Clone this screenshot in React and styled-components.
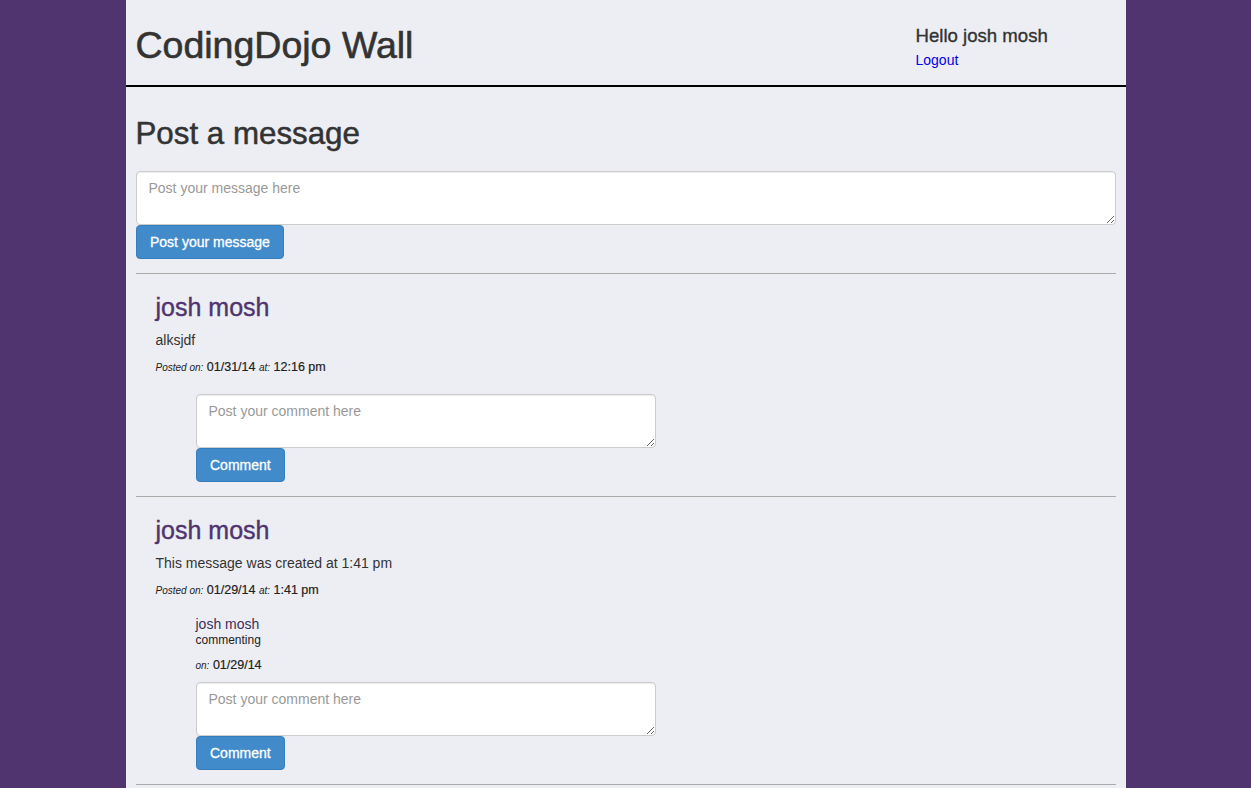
import React from 'react';
import styled, { createGlobalStyle } from 'styled-components';

const GlobalStyle = createGlobalStyle`
  html, body {
    margin: 0;
    padding: 0;
    background: #4f3470;
  }
  body {
    font-family: "Liberation Sans", Arial, Helvetica, sans-serif;
    font-size: 14px;
    color: #333;
  }
  * {
    box-sizing: border-box;
  }
`;

const Page = styled.div`
  width: 1000px;
  min-height: 100vh;
  margin: 0 auto;
  background: #edeef3;
`;

const Header = styled.header`
  display: flex;
  justify-content: space-between;
  align-items: flex-start;
  height: 87px;
  padding: 25px 10px 0;
  border-bottom: 2px solid #000;
`;

const Title = styled.h1`
  margin: 0;
  font-size: 37.5px;
  font-weight: normal;
  line-height: 41px;
  color: #333;
  -webkit-text-stroke: 0.6px #333;
`;

const UserBox = styled.div`
  display: flex;
  flex-direction: column;
  width: 200px;
  padding-top: 1px;
`;

const Greeting = styled.div`
  font-size: 18.6px;
  line-height: 20px;
  color: #333;
  -webkit-text-stroke: 0.35px #333;
`;

const LogoutLink = styled.a`
  margin-top: 4px;
  font-size: 14px;
  line-height: 20px;
  color: #0000ee;
  text-decoration: none;
  cursor: pointer;
`;

const Main = styled.main`
  padding: 0 10px;
`;

const SectionTitle = styled.h2`
  margin: 29px 0 20px;
  font-size: 31.3px;
  font-weight: normal;
  line-height: 35px;
  color: #333;
  -webkit-text-stroke: 0.5px #333;
`;

const TextArea = styled.textarea`
  display: block;
  width: ${props => props.width || '100%'};
  height: 54px;
  margin: 0;
  padding: 6px 12px;
  font-family: "Liberation Sans", Arial, Helvetica, sans-serif;
  font-size: 14px;
  line-height: 20px;
  color: #555;
  background: #fff;
  border: 1px solid #ccc;
  border-radius: 4px;
  box-shadow: inset 0 1px 1px rgba(0, 0, 0, 0.075);
  outline: none;

  &::placeholder {
    color: #999;
  }
`;

const Button = styled.button`
  display: inline-block;
  height: 34px;
  padding: 6px 13.5px;
  font-family: "Liberation Sans", Arial, Helvetica, sans-serif;
  font-size: 14px;
  line-height: 20px;
  color: #fff;
  -webkit-text-stroke: 0.3px #fff;
  background: #428bca;
  border: 1px solid #357ebd;
  border-radius: 4px;
  cursor: pointer;
`;

const Form = styled.form`
  display: flex;
  flex-direction: column;
  align-items: flex-start;
`;

const Divider = styled.hr`
  margin: 14px 0 0;
  border: 0;
  border-top: 1px solid #aaa;
  height: 0;
`;

const Message = styled.div`
  padding: 19px 0 0 20px;
`;

const Author = styled.h3`
  margin: 0;
  font-size: 25px;
  font-weight: normal;
  line-height: 28px;
  color: #4f3470;
  -webkit-text-stroke: 0.4px #4f3470;
`;

const MessageText = styled.p`
  margin: 9px 0 0;
  font-size: 14px;
  line-height: 20px;
`;

const Meta = styled.p`
  margin: ${props => props.tight ? '11px 0 0' : '9px 0 0'};
  font-size: 12.5px;
  line-height: ${props => props.tight ? '14px' : '17px'};
  color: #222;
  -webkit-text-stroke: 0.2px #222;
`;

const MetaLabel = styled.em`
  font-size: 10px;
  -webkit-text-stroke: 0;
`;

const Comments = styled.div`
  margin: 18px 0 0 40px;
`;

const Comment = styled.div`
  margin-bottom: 9px;
`;

const CommentAuthor = styled.div`
  font-size: 14px;
  line-height: 14px;
  color: #3b2e5a;
`;

const CommentText = styled.div`
  padding-top: 2px;
  font-size: 12px;
  line-height: 14px;
  color: #222;
`;

const messages = [
  {
    id: 1,
    author: 'josh mosh',
    text: 'alksjdf',
    date: '01/31/14',
    time: '12:16 pm',
    comments: [],
  },
  {
    id: 2,
    author: 'josh mosh',
    text: 'This message was created at 1:41 pm',
    date: '01/29/14',
    time: '1:41 pm',
    comments: [{ id: 1, author: 'josh mosh', text: 'commenting', date: '01/29/14' }],
  },
];

const MessageItem = ({ message }) => (
  <>
    <Message>
      <Author>{message.author}</Author>
      <MessageText>{message.text}</MessageText>
      <Meta>
        <MetaLabel>Posted on:</MetaLabel> {message.date} <MetaLabel>at:</MetaLabel> {message.time}
      </Meta>
      <Comments>
        {message.comments.map(comment => (
          <Comment key={comment.id}>
            <CommentAuthor>{comment.author}</CommentAuthor>
            <CommentText>{comment.text}</CommentText>
            <Meta tight>
              <MetaLabel>on:</MetaLabel> {comment.date}
            </Meta>
          </Comment>
        ))}
        <Form onSubmit={e => e.preventDefault()}>
          <TextArea width="460px" placeholder="Post your comment here" />
          <Button type="submit">Comment</Button>
        </Form>
      </Comments>
    </Message>
    <Divider />
  </>
);

export default function App() {
  return (
    <>
      <GlobalStyle />
      <Page>
        <Header>
          <Title>CodingDojo Wall</Title>
          <UserBox>
            <Greeting>Hello josh mosh</Greeting>
            <LogoutLink>Logout</LogoutLink>
          </UserBox>
        </Header>
        <Main>
          <SectionTitle>Post a message</SectionTitle>
          <Form onSubmit={e => e.preventDefault()}>
            <TextArea placeholder="Post your message here" />
            <Button type="submit">Post your message</Button>
          </Form>
          <Divider />
          {messages.map(message => (
            <MessageItem key={message.id} message={message} />
          ))}
        </Main>
      </Page>
    </>
  );
}
